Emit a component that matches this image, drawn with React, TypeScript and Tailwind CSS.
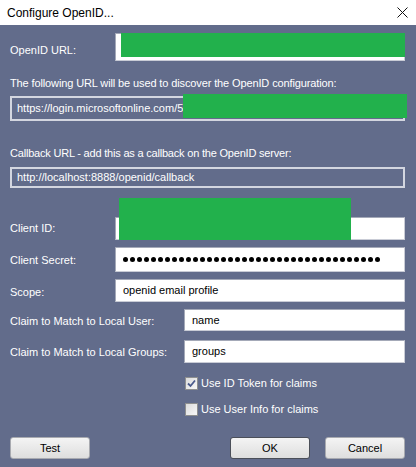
import React from 'react';

const font = { fontFamily: '"Liberation Sans", Arial, sans-serif' };

function Redact({ className }: { className: string }) {
  return <div className={`absolute bg-[#22b14c] ${className}`} />;
}

function TextBox({ className, children }: { className: string; children?: React.ReactNode }) {
  return (
    <div
      className={`flex items-center bg-white border border-t-[#a4a9b8] border-l-[#a4a9b8] border-r-[#c9ccd6] border-b-[#c9ccd6] pl-[7px] text-[11px] text-black ${className}`}
    >
      {children}
    </div>
  );
}

function Row({
  label,
  labelW,
  top,
  labelTop,
  boxH,
  children,
}: {
  label: string;
  labelW: string;
  top: string;
  labelTop: string;
  boxH: string;
  children?: React.ReactNode;
}) {
  return (
    <div className={`flex items-start ${top}`}>
      <div className={`${labelW} ${labelTop} shrink-0 text-[11px] leading-[13px] text-white`}>{label}</div>
      <TextBox className={`flex-1 ${boxH}`}>{children}</TextBox>
    </div>
  );
}

function CheckBox({ checked, label, top }: { checked: boolean; label: string; top: string }) {
  return (
    <div className={`flex items-center pl-[175px] ${top}`}>
      <div className="flex h-[13px] w-[13px] items-center justify-center border border-[#8e8f8f] bg-gradient-to-br from-[#dcdcdc] to-[#f7f7f7]">
        {checked && (
          <svg width="9" height="9" viewBox="0 0 9 9">
            <path d="M1 4.5 L3.5 7 L8 1.5" fill="none" stroke="#4a5a8c" strokeWidth="1.8" />
          </svg>
        )}
      </div>
      <span className="ml-[3px] text-[11px] leading-[13px] text-white">{label}</span>
    </div>
  );
}

function Btn({ label, primary }: { label: string; primary?: boolean }) {
  return (
    <div
      className={`flex h-[22px] w-[80px] items-center justify-center rounded-[3px] border bg-gradient-to-b from-[#f4f4f4] to-[#dedede] text-[11px] text-black ${
        primary ? 'border-[#4b4f59]' : 'border-[#a8aab0]'
      }`}
    >
      {label}
    </div>
  );
}

export default function App() {
  const dots = Array.from({ length: 37 });
  return (
    <div className="relative h-[467px] w-[416px] overflow-hidden bg-[#626c8b]" style={font}>
      <div className="flex h-[25px] items-center justify-between bg-white pl-[7px] pr-[8px]">
        <span className="text-[12px] text-black">Configure OpenID...</span>
        <svg width="11" height="11" viewBox="0 0 11 11">
          <path d="M0.5 0.5 L10.5 10.5 M10.5 0.5 L0.5 10.5" stroke="#111" strokeWidth="1" />
        </svg>
      </div>

      <div className="flex flex-col pl-[10px] pr-[11px]">
        <Row label="OpenID URL:" labelW="w-[105px]" top="mt-[8px]" labelTop="mt-[11px]" boxH="h-[28px]" />

        <div className="mt-[16px] text-[11px] leading-[13px] tracking-[-0.12px] text-white">
          The following URL will be used to discover the OpenID configuration:
        </div>
        <div className="mt-[6px] flex h-[25px] items-center border-2 border-[#d3d6e0] pl-[5px] text-[11px] text-white">
          https://login.microsoftonline.com/5
        </div>

        <div className="mt-[26px] text-[11px] leading-[13px] tracking-[-0.2px] text-white">
          Callback URL - add this as a callback on the OpenID server:
        </div>
        <div className="mt-[7px] flex h-[21px] items-center border-2 border-[#d3d6e0] pl-[5px] text-[11px] text-white">
          http://localhost:8888/openid/callback
        </div>

        <Row label="Client ID:" labelW="w-[105px]" top="mt-[29px]" labelTop="mt-[5px]" boxH="h-[23px]" />
        <Row label="Client Secret:" labelW="w-[105px]" top="mt-[7px]" labelTop="mt-[7px]" boxH="h-[25px]">
          <div className="flex gap-[2px]">
            {dots.map((_, i) => (
              <span key={i} className="h-[5px] w-[5px] rounded-full bg-black" />
            ))}
          </div>
        </Row>
        <Row label="Scope:" labelW="w-[105px]" top="mt-[7px]" labelTop="mt-[7px]" boxH="h-[23px]">
          openid email profile
        </Row>
        <Row
          label="Claim to Match to Local User:"
          labelW="w-[174px]"
          top="mt-[7px]"
          labelTop="mt-[6px]"
          boxH="h-[22px]"
        >
          name
        </Row>
        <Row
          label="Claim to Match to Local Groups:"
          labelW="w-[174px]"
          top="mt-[9px]"
          labelTop="mt-[6px]"
          boxH="h-[23px]"
        >
          groups
        </Row>

        <CheckBox checked label="Use ID Token for claims" top="mt-[14px]" />
        <CheckBox checked={false} label="Use User Info for claims" top="mt-[13px]" />

        <div className="mt-[21px] flex items-center">
          <Btn label="Test" />
          <div className="flex-1" />
          <Btn label="OK" primary />
          <div className="w-[15px]" />
          <Btn label="Cancel" />
        </div>
      </div>

      <Redact className="left-[121px] top-[33px] h-[24px] w-[284px]" />
      <Redact className="left-[183px] top-[94px] h-[24px] w-[224px]" />
      <Redact className="left-[119px] top-[198px] h-[42px] w-[232px]" />
    </div>
  );
}
